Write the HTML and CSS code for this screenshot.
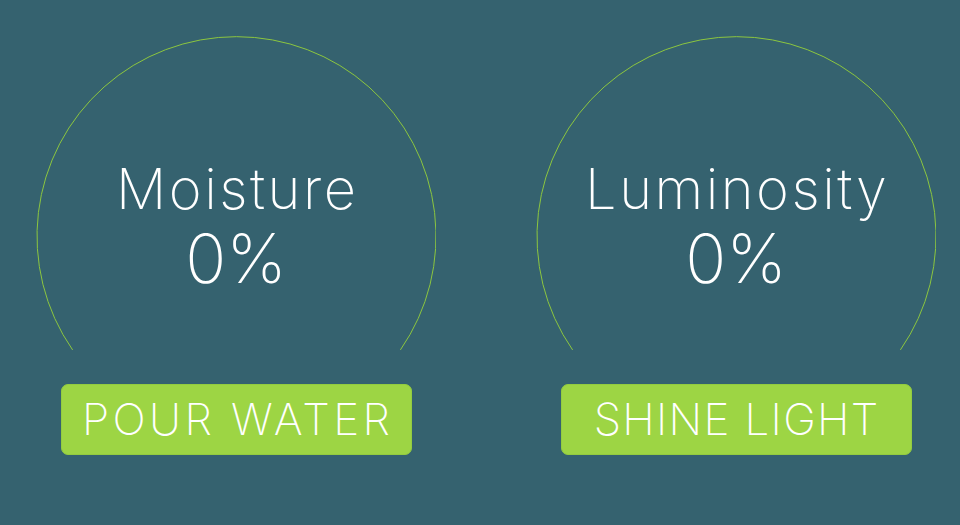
FILE: index.html
```html
<!DOCTYPE html>
<html>
<head>
<meta charset="utf-8">
<link rel="stylesheet" href="styles.css">
</head>
<body>
<main class="panel">
  <section class="gauge">
    <div class="dial">
      <svg class="ring" viewBox="0 0 400 320" width="400" height="320">
        <path d="M36.6 314.9 A199.5 199.5 0 1 1 364.4 314.9" fill="none" stroke="#8cc63f" stroke-width="1"/>
      </svg>
      <div class="readout">
        <div class="label">Moisture</div>
        <div class="value">0%</div>
      </div>
    </div>
    <button class="action action-wide">POUR WATER</button>
  </section>
  <section class="gauge">
    <div class="dial">
      <svg class="ring" viewBox="0 0 400 320" width="400" height="320">
        <path d="M36.6 314.9 A199.5 199.5 0 1 1 364.4 314.9" fill="none" stroke="#8cc63f" stroke-width="1"/>
      </svg>
      <div class="readout">
        <div class="label">Luminosity</div>
        <div class="value">0%</div>
      </div>
    </div>
    <button class="action action-narrow">SHINE LIGHT</button>
  </section>
</main>
</body>
</html>
```
FILE: styles.css
```css
html, body {
  margin: 0;
  padding: 0;
  background: #35626f;
  width: 960px;
  height: 525px;
  overflow: hidden;
}
.panel {
  display: flex;
  gap: 100px;
  padding: 35px 0 0 36px;
  font-family: "Inter", "Lato", sans-serif;
  color: #ffffff;
}
.gauge {
  width: 400px;
  display: flex;
  flex-direction: column;
  align-items: center;
}
.dial {
  display: grid;
  width: 400px;
  height: 320px;
}
.ring {
  grid-area: 1 / 1;
  display: block;
}
.readout {
  grid-area: 1 / 1;
  display: flex;
  flex-direction: column;
  align-items: center;
  padding-top: 122px;
}
.label {
  font-weight: 200;
  font-size: 56px;
  line-height: 64px;
  letter-spacing: 2.5px;
  padding-left: 2.5px;
}
.value {
  font-weight: 200;
  font-size: 68px;
  line-height: 74px;
}
.action {
  margin-top: 29px;
  width: 351px;
  height: 71px;
  border: 1px solid #93cc3f;
  border-radius: 7px;
  background: #9dd544;
  color: #ffffff;
  font-family: "Inter", "Lato", sans-serif;
  font-weight: 200;
  font-size: 44px;
  line-height: 66px;
  padding: 0 0 2px 0;
}
.action-wide {
  letter-spacing: 3.4px;
  padding-left: 3.4px;
}
.action-narrow {
  letter-spacing: 1.3px;
  padding-left: 1.3px;
}
```
